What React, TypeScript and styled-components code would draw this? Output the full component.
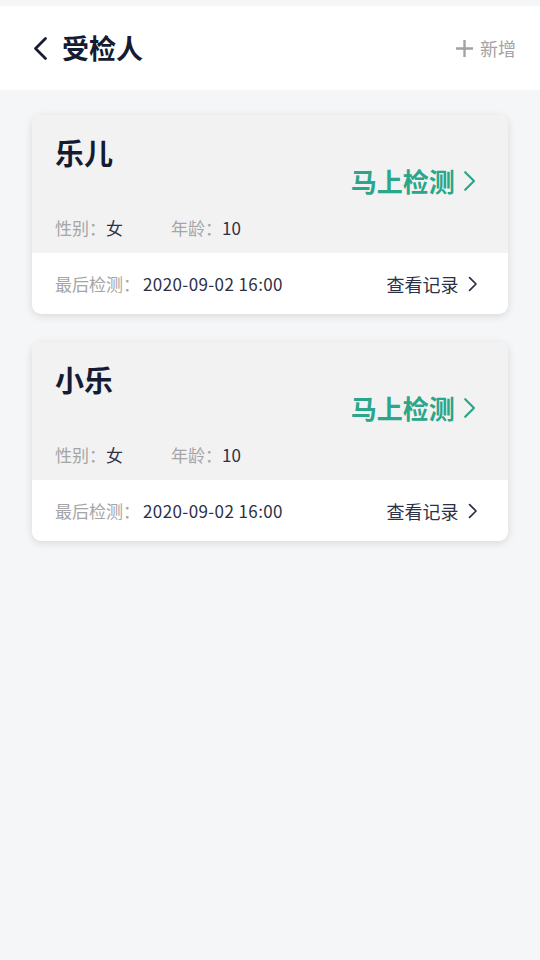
import React from "react";
import styled, { createGlobalStyle } from "styled-components";

const Global = createGlobalStyle`
  html, body { margin: 0; padding: 0; background: #f5f6f8; }
  body { font-family: "Noto Sans CJK SC", "Noto Sans", sans-serif; }
  * { box-sizing: border-box; }
`;

const Page = styled.div`
  min-height: 960px;
  background: #f5f6f8;
  padding-top: 6px;
`;

const Header = styled.header`
  height: 84px;
  background: #fff;
  display: flex;
  align-items: center;
  justify-content: space-between;
  padding: 0 24px 0 33px;
`;

const TitleGroup = styled.div`
  display: flex;
  align-items: center;
  gap: 14px;
`;

const Title = styled.h1`
  margin: 0 0 2px;
  font-size: 27px;
  font-weight: 700;
  color: #141b33;
  line-height: 1;
`;

const AddButton = styled.button`
  border: 0;
  background: none;
  padding: 0;
  display: flex;
  align-items: center;
  gap: 6px;
  font-family: inherit;
  font-size: 18px;
  color: #a3a3a6;
`;

const List = styled.main`
  display: flex;
  flex-direction: column;
  gap: 28px;
  padding: 25px 32px;
`;

const Card = styled.section`
  border-radius: 9px;
  overflow: hidden;
  background: #fff;
  box-shadow: 0 2px 8px rgba(0, 0, 0, 0.12);
`;

const CardTop = styled.div`
  background: #f2f2f2;
  padding: 19px 32px 13px 23px;
  display: flex;
  flex-direction: column;
`;

const Name = styled.div`
  font-size: 29px;
  font-weight: 700;
  color: #141b33;
  line-height: 37px;
`;

const ActionRow = styled.div`
  display: flex;
  justify-content: flex-end;
  margin-top: -7px;
`;

const Detect = styled.div`
  display: flex;
  align-items: center;
  gap: 8px;
  font-size: 26px;
  font-weight: 700;
  color: #2aa68a;
  line-height: 34px;
`;

const InfoRow = styled.div`
  display: flex;
  gap: 48px;
  margin-top: 18px;
  font-size: 17px;
  line-height: 24px;
`;

const Field = styled.span`
  color: #a5a5a8;
`;

const Value = styled.span<{ $gap?: number; $spacing?: number }>`
  color: #2c3147;
  margin-left: ${(p) => p.$gap ?? 0}px;
  letter-spacing: ${(p) => p.$spacing ?? 0}px;
`;

const CardBottom = styled.div`
  height: 61px;
  display: flex;
  align-items: center;
  justify-content: space-between;
  padding: 0 30px 0 23px;
  font-size: 17px;
`;

const LinkText = styled.div`
  display: flex;
  align-items: center;
  gap: 10px;
  color: #2c3147;
  font-size: 18px;
`;

const Chevron = ({ size, color, stroke, dir = "right" }: { size: number; color: string; stroke: number; dir?: "left" | "right" }) => (
  <svg width={size * 0.6} height={size} viewBox="0 0 12 20" fill="none">
    <path
      d={dir === "right" ? "M2 2 L10 10 L2 18" : "M10 2 L2 10 L10 18"}
      stroke={color}
      strokeWidth={stroke}
      strokeLinecap="round"
      strokeLinejoin="round"
    />
  </svg>
);

const people = [
  { name: "乐儿", gender: "女", age: 10, last: "2020-09-02 16:00" },
  { name: "小乐", gender: "女", age: 10, last: "2020-09-02 16:00" },
];

export default function App() {
  return (
    <Page>
      <Global />
      <Header>
        <TitleGroup>
          <Chevron size={25} color="#141b33" stroke={2.2} dir="left" />
          <Title>受检人</Title>
        </TitleGroup>
        <AddButton>
          <svg width="19" height="19" viewBox="0 0 19 19">
            <path d="M9.5 1 V18 M1 9.5 H18" stroke="#a3a3a6" strokeWidth="2.4" />
          </svg>
          新增
        </AddButton>
      </Header>
      <List>
        {people.map((p) => (
          <Card key={p.name}>
            <CardTop>
              <Name>{p.name}</Name>
              <ActionRow>
                <Detect>
                  马上检测
                  <Chevron size={22} color="#2aa68a" stroke={2} />
                </Detect>
              </ActionRow>
              <InfoRow>
                <span>
                  <Field>性别：</Field>
                  <Value>{p.gender}</Value>
                </span>
                <span>
                  <Field>年龄：</Field>
                  <Value>{p.age}</Value>
                </span>
              </InfoRow>
            </CardTop>
            <CardBottom>
              <span>
                <Field>最后检测：</Field>
                <Value $gap={3} $spacing={0.4}>{p.last}</Value>
              </span>
              <LinkText>
                查看记录
                <Chevron size={16} color="#2c3147" stroke={2.2} />
              </LinkText>
            </CardBottom>
          </Card>
        ))}
      </List>
    </Page>
  );
}
